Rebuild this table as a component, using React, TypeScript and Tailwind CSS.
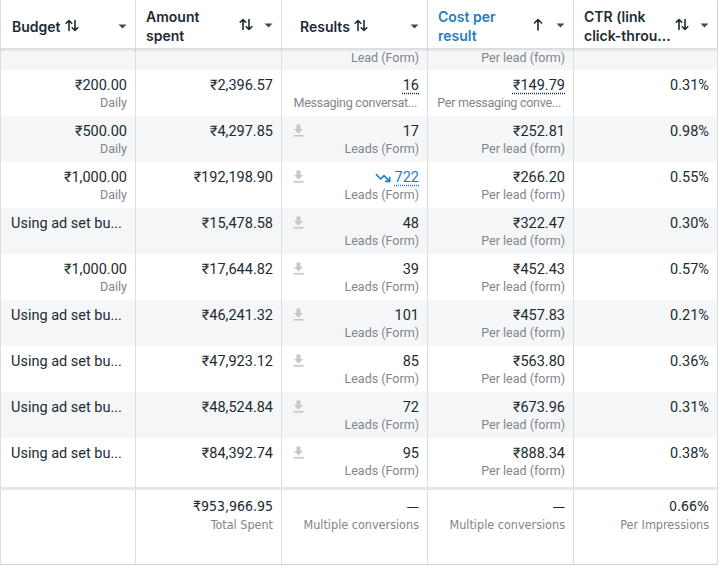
import React from "react";
import { TrendingDown } from "lucide-react";

const SortBoth = () => (
  <svg width="14" height="13" viewBox="0 0 14 13" fill="none" stroke="#1c2b33" strokeWidth="1.6" strokeLinecap="round" strokeLinejoin="round">
    <path d="M4 11.5V1.5M1.2 4.3L4 1.5L6.8 4.3" />
    <path d="M10 1.5V11.5M7.2 8.7L10 11.5L12.8 8.7" />
  </svg>
);

const SortUp = () => (
  <svg width="10" height="13" viewBox="0 0 10 13" fill="none" stroke="#1c2b33" strokeWidth="1.6" strokeLinecap="round" strokeLinejoin="round">
    <path d="M5 12V1.5M1.5 5L5 1.5L8.5 5" />
  </svg>
);

const Caret = () => (
  <svg width="9" height="5" viewBox="0 0 9 5">
    <path d="M0.5 0.5H8.5L4.5 4.5Z" fill="#444950" />
  </svg>
);

const Download = () => (
  <svg width="11" height="13" viewBox="0 0 11 13">
    <path d="M3.5 0.5H7.5V5H10L5.5 9.5L1 5H3.5Z" fill="#c4c8cc" />
    <rect x="0.5" y="11" width="10" height="1.6" fill="#c4c8cc" />
  </svg>
);

type Row = {
  budget: string;
  daily: boolean;
  spent: string;
  icon: boolean;
  result: string;
  resultLabel: string;
  trend?: boolean;
  dotted?: boolean;
  cost: string;
  costLabel: string;
  ctr: string;
};

const rows: Row[] = [
  { budget: "₹200.00", daily: true, spent: "₹2,396.57", icon: false, result: "16", resultLabel: "Messaging conversat...", dotted: true, cost: "₹149.79", costLabel: "Per messaging conve...", ctr: "0.31%" },
  { budget: "₹500.00", daily: true, spent: "₹4,297.85", icon: true, result: "17", resultLabel: "Leads (Form)", cost: "₹252.81", costLabel: "Per lead (form)", ctr: "0.98%" },
  { budget: "₹1,000.00", daily: true, spent: "₹192,198.90", icon: true, result: "722", resultLabel: "Leads (Form)", trend: true, cost: "₹266.20", costLabel: "Per lead (form)", ctr: "0.55%" },
  { budget: "Using ad set bu...", daily: false, spent: "₹15,478.58", icon: true, result: "48", resultLabel: "Leads (Form)", cost: "₹322.47", costLabel: "Per lead (form)", ctr: "0.30%" },
  { budget: "₹1,000.00", daily: true, spent: "₹17,644.82", icon: true, result: "39", resultLabel: "Leads (Form)", cost: "₹452.43", costLabel: "Per lead (form)", ctr: "0.57%" },
  { budget: "Using ad set bu...", daily: false, spent: "₹46,241.32", icon: true, result: "101", resultLabel: "Leads (Form)", cost: "₹457.83", costLabel: "Per lead (form)", ctr: "0.21%" },
  { budget: "Using ad set bu...", daily: false, spent: "₹47,923.12", icon: true, result: "85", resultLabel: "Leads (Form)", cost: "₹563.80", costLabel: "Per lead (form)", ctr: "0.36%" },
  { budget: "Using ad set bu...", daily: false, spent: "₹48,524.84", icon: true, result: "72", resultLabel: "Leads (Form)", cost: "₹673.96", costLabel: "Per lead (form)", ctr: "0.31%" },
  { budget: "Using ad set bu...", daily: false, spent: "₹84,392.74", icon: true, result: "95", resultLabel: "Leads (Form)", cost: "₹888.34", costLabel: "Per lead (form)", ctr: "0.38%" },
];

const grid = "grid grid-cols-[135px_146px_146px_146px_144px]";
const cellB = "border-l border-[#dadde1]";
const prim = "text-[14.5px] leading-[20px] text-[#1c2b33] whitespace-nowrap";
const sec = "text-[12.5px] leading-[16px] text-[#80868c] whitespace-nowrap";
const secTrunc = "text-[12.5px] leading-[16px] text-[#80868c] whitespace-nowrap tracking-[-0.25px]";
const body = { fontFamily: "Roboto, 'Noto Sans', sans-serif" };

export default function App() {
  return (
    <div
      className="w-[721px] h-[569px] bg-white overflow-hidden relative"
      style={{ fontFamily: "Inter, 'Noto Sans', sans-serif" }}
    >
      <div className="w-[718px] border-r border-[#dadde1]">
        {/* Header */}
        <div className={`${grid} h-[49px] border-b border-[#dadde1] shadow-[0_1px_2px_rgba(0,0,0,0.12)] relative z-10 bg-white`}>
          <div className={`${cellB} flex items-center pt-[4px] pl-[11px] pr-[8px]`}>
            <span className="text-[14px] font-semibold text-[#1c2b33]">Budget</span>
            <span className="ml-[4px] mb-[2px]"><SortBoth /></span>
            <span className="ml-auto"><Caret /></span>
          </div>
          <div className={`${cellB} flex items-center pt-[3px] pl-[10px] pr-[8px]`}>
            <span className="text-[14px] leading-[19px] font-semibold text-[#1c2b33]">Amount<br />spent</span>
            <span className="ml-auto mr-[11px] mb-[2px]"><SortBoth /></span>
            <Caret />
          </div>
          <div className={`${cellB} flex items-center pt-[4px] pl-[18px] pr-[8px]`}>
            <span className="text-[14px] font-semibold text-[#1c2b33]">Results</span>
            <span className="ml-[4px] mb-[2px]"><SortBoth /></span>
            <span className="ml-auto"><Caret /></span>
          </div>
          <div className={`${cellB} flex items-center pt-[3px] pl-[10px] pr-[8px]`}>
            <span className="text-[14px] leading-[19px] font-semibold text-[#1f7ec0]">Cost per<br />result</span>
            <span className="ml-auto mr-[13px] mb-[2px]"><SortUp /></span>
            <Caret />
          </div>
          <div className={`${cellB} flex items-center pt-[3px] pl-[10px] pr-[8px]`}>
            <span className="text-[14px] leading-[19px] font-semibold text-[#1c2b33]">CTR (link<br />click-throu...</span>
            <span className="ml-auto mr-[11px] mb-[2px]"><SortBoth /></span>
            <Caret />
          </div>
        </div>

        <div style={body}>
          {/* Partial top row */}
          <div className={`${grid} h-[21px] bg-[#f5f6f7]`}>
            <div className={cellB} />
            <div className={cellB} />
            <div className={`${cellB} text-right pr-[8px]`}>
              <div className={`${sec} pt-[1px]`}>Lead (Form)</div>
            </div>
            <div className={`${cellB} text-right pr-[8px]`}>
              <div className={`${sec} pt-[1px]`}>Per lead (form)</div>
            </div>
            <div className={cellB} />
          </div>

          {/* Rows */}
          {rows.map((r, i) => (
            <div key={i} className={`${grid} h-[46px] ${i % 2 === 1 ? "bg-[#f5f6f7]" : "bg-white"}`}>
              <div className={`${cellB} pt-[6px] ${r.daily ? "text-right pr-[8px]" : "pl-[10px]"}`}>
                <div className={prim}>{r.budget}</div>
                {r.daily && <div className={`${sec} -mt-[1px]`}>Daily</div>}
              </div>
              <div className={`${cellB} pt-[6px] text-right pr-[8px]`}>
                <div className={prim}>{r.spent}</div>
              </div>
              <div className={`${cellB} pt-[6px] pl-[11px] pr-[8px] flex`}>
                {r.icon && (
                  <div className="w-[14px] pt-[2px] shrink-0">
                    <Download />
                  </div>
                )}
                <div className="flex-1 min-w-0 text-right">
                  <div className={`${prim} flex justify-end items-center`}>
                    {r.trend && <TrendingDown size={16} color="#1f7ec0" strokeWidth={2.4} className="mr-[4px]" />}
                    <span
                      className={
                        r.trend
                          ? "text-[#1f7ec0] underline decoration-dotted underline-offset-[3px] decoration-[#1f7ec0]"
                          : r.dotted
                          ? "underline decoration-dotted underline-offset-[3px]"
                          : ""
                      }
                    >
                      {r.result}
                    </span>
                  </div>
                  <div className={`${r.icon ? sec : secTrunc} -mt-[1px] ${r.icon ? "" : "pr-[2px]"}`}>{r.resultLabel}</div>
                </div>
              </div>
              <div className={`${cellB} pt-[6px] text-right pr-[8px]`}>
                <div className={prim}>
                  <span className={r.dotted ? "underline decoration-dotted underline-offset-[3px]" : ""}>{r.cost}</span>
                </div>
                <div className={`${r.icon ? sec : `${secTrunc} pr-[4px]`} -mt-[1px]`}>{r.costLabel}</div>
              </div>
              <div className={`${cellB} pt-[6px] text-right pr-[8px]`}>
                <div className={prim}>{r.ctr}</div>
              </div>
            </div>
          ))}

          {/* Gap before footer */}
          <div className={`${grid} h-[3px]`}>
            <div className={cellB} />
            <div className={cellB} />
            <div className={cellB} />
            <div className={cellB} />
            <div className={cellB} />
          </div>

          {/* Footer */}
          <div className={`${grid} h-[78px] border-t-[3px] border-[#e4e6e9] border-b border-b-[#cfd2d6]`}>
            <div className={cellB} />
            {[
              ["₹953,966.95", "Total Spent"],
              ["—", "Multiple conversions"],
              ["—", "Multiple conversions"],
              ["0.66%", "Per Impressions"],
            ].map(([v, l], k) => (
              <div key={k} className={`${cellB} pt-[6px] text-right pr-[8px]`}>
                <div
                  className="text-[14px] leading-[20px] text-[#1c2b33]"
                  style={{ fontFamily: "'DejaVu Sans Condensed', 'Liberation Sans Narrow', 'Noto Sans', sans-serif" }}
                >
                  {v}
                </div>
                <div
                  className="text-[12.5px] leading-[18px] text-[#80868c] whitespace-nowrap"
                  style={{ fontFamily: "'Liberation Sans Narrow', 'DejaVu Sans Condensed', 'Noto Sans', sans-serif" }}
                >
                  {l}
                </div>
              </div>
            ))}
          </div>
        </div>
      </div>
    </div>
  );
}
